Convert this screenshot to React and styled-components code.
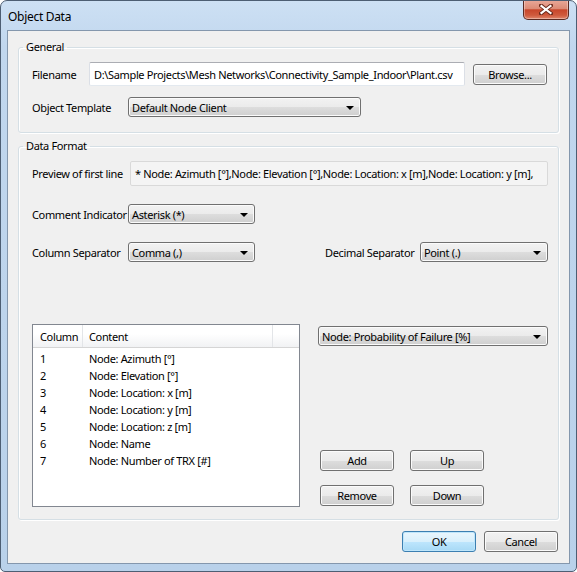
import React from 'react';
import styled, { createGlobalStyle } from 'styled-components';

const GlobalStyle = createGlobalStyle`
  html, body { margin: 0; padding: 0; background: #ffffff; }
  body {
    font-family: "Noto Sans", "Liberation Sans", sans-serif;
    font-size: 11px;
    letter-spacing: -0.35px;
    color: #000;
  }
  * { box-sizing: border-box; }
`;

const Window = styled.div`
  width: 577px;
  height: 572px;
  border: 1px solid #4d5e73;
  border-radius: 7px 7px 5px 5px;
  background: linear-gradient(180deg, #cde0f4 0%, #c1d7ee 8%, #b9d1ea 100%);
  display: flex;
  flex-direction: column;
  padding: 0 6px 7px 6px;
  overflow: hidden;
`;

const TitleBar = styled.div`
  height: 29px;
  margin: 0 -6px;
  padding-left: 7px;
  display: flex;
  justify-content: space-between;
  align-items: flex-start;
`;

const Title = styled.div`
  align-self: center;
  font-size: 12px;
  letter-spacing: -0.3px;
  color: #000;
  margin-top: 1px;
`;

const CloseButton = styled.div`
  width: 46px;
  height: 20px;
  margin-top: -1px;
  margin-right: 7px;
  border: 1px solid #5a2a22;
  border-top: none;
  border-radius: 0 0 5px 5px;
  background: linear-gradient(180deg, #e9a99a 0%, #dc8b76 45%, #c8462b 52%, #cf5a3d 80%, #e0866c 100%);
  box-shadow: inset 0 0 0 1px rgba(255, 255, 255, 0.35);
  display: flex;
  align-items: center;
  justify-content: center;
`;

const Client = styled.div`
  flex: 1;
  background: #f0f0f0;
  border: 1px solid #8497ad;
  display: flex;
  flex-direction: column;
  padding: 9px 10px 0 10px;
`;

const Group = styled.fieldset`
  margin: 0 0 ${(p) => p.$gapBelow || 0}px 0;
  padding: 0;
  min-width: 0;
  border: 1px solid #d5dfe5;
  border-radius: 3px;
  box-shadow: inset 1px 1px 0 #ffffff, 1px 1px 0 #ffffff;
`;

const Legend = styled.legend`
  margin-left: 4px;
  padding: 0 3px;
  line-height: 14px;
  font-size: 11px;
`;

const GroupBody = styled.div`
  display: flex;
  flex-direction: column;
  padding: ${(p) => p.$padding};
`;

const Row = styled.div`
  display: flex;
  align-items: center;
  margin-top: ${(p) => p.$top || 0}px;
  justify-content: ${(p) => (p.$spread ? 'space-between' : 'flex-start')};
`;

const Pair = styled.div`
  display: flex;
  align-items: center;
`;

const Label = styled.span`
  width: ${(p) => p.$w}px;
  flex: none;
  white-space: nowrap;
`;

const TextInput = styled.div`
  width: ${(p) => p.$w}px;
  height: 24px;
  background: #ffffff;
  border: 1px solid #abadb3;
  border-left-color: #dbdfe6;
  border-right-color: #dbdfe6;
  border-bottom-color: #e3e9ef;
  border-radius: 2px;
  display: flex;
  align-items: center;
  padding-left: 4px;
  white-space: nowrap;
  overflow: hidden;
`;

const PreviewBox = styled.div`
  flex: 1;
  height: 25px;
  background: #f4f4f4;
  border: 1px solid #d9d9d9;
  border-radius: 2px;
  display: flex;
  align-items: center;
  padding-left: 4px;
  white-space: nowrap;
  overflow: hidden;
`;

const Button = styled.div`
  width: ${(p) => p.$w || 74}px;
  height: 21px;
  flex: none;
  border: 1px solid ${(p) => (p.$default ? '#3c7fb1' : '#707070')};
  border-radius: 3px;
  background: ${(p) =>
    p.$default
      ? 'linear-gradient(180deg, #eaf6fd 0%, #d9f0fc 50%, #bee6fd 51%, #a7d9f5 100%)'
      : 'linear-gradient(180deg, #f2f2f2 0%, #ebebeb 50%, #dddddd 51%, #cfcfcf 100%)'};
  box-shadow: inset 0 0 0 1px ${(p) => (p.$default ? '#bfe6fb' : '#fbfbfb')};
  display: flex;
  align-items: center;
  justify-content: center;
  margin-left: ${(p) => p.$ml || 0}px;
`;

const Select = styled.div`
  width: ${(p) => (p.$w ? `${p.$w}px` : '100%')};
  height: 20px;
  flex: none;
  border: 1px solid #707070;
  border-radius: 3px;
  background: linear-gradient(180deg, #f2f2f2 0%, #ebebeb 50%, #dddddd 51%, #cfcfcf 100%);
  box-shadow: inset 0 0 0 1px #fbfbfb;
  display: flex;
  align-items: center;
  justify-content: space-between;
  padding: 0 6px 0 3px;
  white-space: nowrap;
`;

const Arrow = styled.span`
  width: 0;
  height: 0;
  border-left: 4px solid transparent;
  border-right: 4px solid transparent;
  border-top: 4px solid #000;
  margin-top: 1px;
`;

const Lower = styled.div`
  display: flex;
  margin-top: 62px;
`;

const Table = styled.div`
  width: 268px;
  height: 183px;
  flex: none;
  border: 1px solid #828790;
  background: #ffffff;
  display: flex;
  flex-direction: column;
`;

const HeaderRow = styled.div`
  display: grid;
  grid-template-columns: 50px 190px 1fr;
  height: 23px;
  background: linear-gradient(180deg, #ffffff 0%, #ffffff 40%, #f1f2f4 100%);
  border-bottom: 1px solid #d5d5d5;
`;

const HeaderCell = styled.div`
  display: flex;
  align-items: center;
  padding-left: ${(p) => p.$pl}px;
  border-right: ${(p) => (p.$last ? 'none' : '1px solid #e3e5e8')};
`;

const Body = styled.div`
  padding-top: 2px;
`;

const DataRow = styled.div`
  display: grid;
  grid-template-columns: 50px 1fr;
  height: 17px;
  align-items: center;
`;

const Cell = styled.div`
  padding-left: ${(p) => p.$pl}px;
  white-space: nowrap;
`;

const RightCol = styled.div`
  flex: 1;
  margin-left: 18px;
  padding-top: 2px;
  display: flex;
  flex-direction: column;
`;

const ButtonGrid = styled.div`
  margin-top: auto;
  margin-bottom: 1px;
  padding-left: 2px;
  display: grid;
  grid-template-columns: 74px 74px;
  column-gap: 16px;
  row-gap: 14px;
`;

const Footer = styled.div`
  display: flex;
  justify-content: flex-end;
  gap: 8px;
  margin-top: 11px;
  padding-right: 1px;
`;

const CloseIcon = () => (
  <svg width="14" height="11" viewBox="0 0 14 11">
    <path d="M2 1.5 L12 9.5 M12 1.5 L2 9.5" stroke="#6b2a1c" strokeWidth="4" strokeLinecap="square" />
    <path d="M2.5 2 L11.5 9 M11.5 2 L2.5 9" stroke="#ffffff" strokeWidth="2.2" strokeLinecap="square" />
  </svg>
);

const rows = [
  'Node: Azimuth [°]',
  'Node: Elevation [°]',
  'Node: Location: x [m]',
  'Node: Location: y [m]',
  'Node: Location: z [m]',
  'Node: Name',
  'Node: Number of TRX [#]',
];

export default function App() {
  return (
    <>
      <GlobalStyle />
      <Window>
        <TitleBar>
          <Title>Object Data</Title>
          <CloseButton>
            <CloseIcon />
          </CloseButton>
        </TitleBar>
        <Client>
          <Group $gapBelow={6}>
            <Legend>General</Legend>
            <GroupBody $padding="8px 10px 15px 13px">
              <Row>
                <Label $w={57}>Filename</Label>
                <TextInput $w={376}>
                  D:\Sample Projects\Mesh Networks\Connectivity_Sample_Indoor\Plant.csv
                </TextInput>
                <Button $ml={8}>Browse...</Button>
              </Row>
              <Row $top={11}>
                <Label $w={96}>Object Template</Label>
                <Select $w={233}>
                  Default Node Client
                  <Arrow />
                </Select>
              </Row>
            </GroupBody>
          </Group>
          <Group>
            <Legend>Data Format</Legend>
            <GroupBody $padding="8px 10px 12px 13px">
              <Row>
                <Label $w={98}>Preview of first line</Label>
                <PreviewBox>
                  * Node: Azimuth [°],Node: Elevation [°],Node: Location: x [m],Node: Location: y [m],
                </PreviewBox>
              </Row>
              <Row $top={18}>
                <Label $w={96}>Comment Indicator</Label>
                <Select $w={127}>
                  Asterisk (*)
                  <Arrow />
                </Select>
              </Row>
              <Row $top={18} $spread>
                <Pair>
                  <Label $w={96}>Column Separator</Label>
                  <Select $w={127}>
                    Comma (,)
                    <Arrow />
                  </Select>
                </Pair>
                <Pair>
                  <Label $w={95}>Decimal Separator</Label>
                  <Select $w={128}>
                    Point (.)
                    <Arrow />
                  </Select>
                </Pair>
              </Row>
              <Lower>
                <Table>
                  <HeaderRow>
                    <HeaderCell $pl={7}>Column</HeaderCell>
                    <HeaderCell $pl={6}>Content</HeaderCell>
                    <HeaderCell $last />
                  </HeaderRow>
                  <Body>
                    {rows.map((r, i) => (
                      <DataRow key={r}>
                        <Cell $pl={7}>{i + 1}</Cell>
                        <Cell $pl={6}>{r}</Cell>
                      </DataRow>
                    ))}
                  </Body>
                </Table>
                <RightCol>
                  <Select>
                    Node: Probability of Failure [%]
                    <Arrow />
                  </Select>
                  <ButtonGrid>
                    <Button>Add</Button>
                    <Button>Up</Button>
                    <Button>Remove</Button>
                    <Button>Down</Button>
                  </ButtonGrid>
                </RightCol>
              </Lower>
            </GroupBody>
          </Group>
          <Footer>
            <Button $default>OK</Button>
            <Button>Cancel</Button>
          </Footer>
        </Client>
      </Window>
    </>
  );
}
